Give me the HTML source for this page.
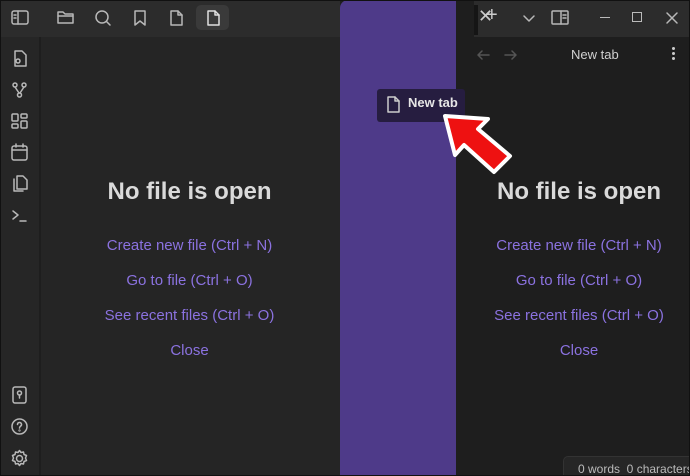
<!DOCTYPE html>
<html><head><style>
*{margin:0;padding:0;box-sizing:border-box}
body{width:690px;height:476px;overflow:hidden;background:#1e1e1e;font-family:"Liberation Sans",sans-serif;position:relative}
.abs{position:absolute}
svg{position:absolute;fill:none;stroke:#b8b8b8;stroke-width:1.5;stroke-linecap:round;stroke-linejoin:round}
.h{color:#dadada;font-weight:bold;font-size:24px;text-align:center;width:100%}
.l{color:#8b72e0;font-size:15px;text-align:center;width:100%}
</style></head><body>
<div class="abs" style="left:0;top:0;width:340px;height:37px;background:#2c2c2c"></div>
<div class="abs" style="left:0;top:37px;width:40px;height:439px;background:#262626;border-right:1px solid #1e1e1e"></div>
<div class="abs" style="left:41px;top:37px;width:299px;height:439px;background:#252525"></div>
<div class="abs" style="left:196px;top:5px;width:33px;height:25px;background:#3a3a3a;border-radius:5px"></div>
<svg style="left:10px;top:9px" width="20" height="18"><rect x="2" y="2" width="16" height="13" rx="2"/><line x1="8" y1="2" x2="8" y2="15"/><line x1="4" y1="6" x2="6" y2="6"/><line x1="4" y1="9" x2="6" y2="9"/></svg>
<svg style="left:56px;top:8px" width="20" height="18"><path d="M2 4h5l2 2h8v9H2z"/><line x1="2" y1="8" x2="17" y2="8"/></svg>
<svg style="left:93px;top:8px" width="20" height="20"><circle cx="9" cy="9" r="6"/><line x1="13.5" y1="13.5" x2="17" y2="17"/></svg>
<svg style="left:130px;top:8px" width="20" height="20"><path d="M5 3h10v14l-5-4-5 4z"/></svg>
<svg style="left:166px;top:8px" width="20" height="20"><path d="M5 3h7l4 4v10H5z"/><path d="M12 3v4h4"/></svg>
<svg style="left:203px;top:8px" width="20" height="20"><path d="M5 3h7l4 4v10H5z" stroke="#e0e0e0"/><path d="M12 3v4h4" stroke="#e0e0e0"/></svg>
<svg style="left:9px;top:48px" width="22" height="22"><path d="M6 3h7l4 4v11H6z"/><circle cx="9" cy="13" r="2"/></svg>
<svg style="left:9px;top:80px" width="22" height="22"><circle cx="6" cy="5" r="2"/><circle cx="15" cy="5" r="2"/><circle cx="10.5" cy="15" r="2"/><path d="M6 7l4 6M15 7l-4 6"/></svg>
<svg style="left:9px;top:111px" width="22" height="22"><rect x="3" y="3" width="6" height="7" rx="1"/><rect x="12" y="3" width="6" height="4" rx="1"/><rect x="3" y="13" width="6" height="4" rx="1"/><rect x="12" y="10" width="6" height="7" rx="1"/></svg>
<svg style="left:9px;top:142px" width="22" height="22"><rect x="3" y="4" width="15" height="14" rx="2"/><line x1="3" y1="8" x2="18" y2="8"/><line x1="7" y1="2" x2="7" y2="5"/><line x1="14" y1="2" x2="14" y2="5"/></svg>
<svg style="left:9px;top:173px" width="22" height="22"><path d="M8 3h6l4 4v9H8z"/><path d="M5 6v12h9"/></svg>
<svg style="left:9px;top:205px" width="22" height="22"><path d="M4 6l5 4-5 4"/><line x1="11" y1="16" x2="17" y2="16"/></svg>
<svg style="left:9px;top:384px" width="22" height="22"><rect x="4" y="3" width="13" height="16" rx="2"/><circle cx="10.5" cy="9" r="2"/><line x1="10.5" y1="11" x2="10.5" y2="14"/></svg>
<svg style="left:9px;top:416px" width="22" height="22"><circle cx="10.5" cy="10.5" r="7.5"/><path d="M8.5 8.5a2 2 0 1 1 3 1.7c-.8.5-1 1-1 1.8"/><circle cx="10.5" cy="14.5" r=".4"/></svg>
<svg style="left:9px;top:448px" width="22" height="22"><circle cx="10.5" cy="10.5" r="3"/><path d="M10.5 2.5l1.5 2 2.5-.5.5 2.5 2.5 1-1 2.5 1 2.5-2.5 1-.5 2.5-2.5-.5-1.5 2-1.5-2-2.5.5-.5-2.5-2.5-1 1-2.5-1-2.5 2.5-1 .5-2.5 2.5.5z"/></svg>
<div class="abs" style="left:40px;top:178px;width:299px">
<div class="h">No file is open</div>
<div class="l" style="margin-top:31px">Create new file (Ctrl + N)</div>
<div class="l" style="margin-top:18px">Go to file (Ctrl + O)</div>
<div class="l" style="margin-top:18px">See recent files (Ctrl + O)</div>
<div class="l" style="margin-top:18px">Close</div>
</div>
<div class="abs" style="left:340px;top:0;width:116px;height:476px;background:#4e3a89;border-radius:8px 0 0 0"></div>
<div class="abs" style="left:456px;top:0;width:234px;height:37px;background:#2c2c2c"></div>
<div class="abs" style="left:456px;top:0;width:18px;height:37px;background:#1e1e1e"></div>
<div class="abs" style="left:474px;top:5px;width:4px;height:30px;background:#151515"></div>
<div class="abs" style="left:478px;top:6px;color:#ccc;font-size:18px">✕</div>
<div class="abs" style="left:486px;top:4px;color:#ccc;font-size:20px">+</div>
<svg style="left:520px;top:9px" width="18" height="18"><path d="M4 7l5 5 5-5"/></svg>
<svg style="left:550px;top:8px" width="20" height="20"><rect x="2" y="3" width="16" height="13" rx="1"/><line x1="11" y1="3" x2="11" y2="16"/><line x1="13" y1="7" x2="16" y2="7"/><line x1="13" y1="10" x2="16" y2="10"/></svg>
<div class="abs" style="left:600px;top:17px;width:10px;height:1px;background:#bbb"></div>
<div class="abs" style="left:632px;top:12px;width:10px;height:10px;border:1.3px solid #bbb"></div>
<svg style="left:663px;top:9px" width="18" height="18"><path d="M4 4l10 10M14 4L4 14"/></svg>
<svg style="left:474px;top:46px" width="20" height="18"><path d="M15 9H4M8 5L4 9l4 4" stroke="#555"/></svg>
<svg style="left:501px;top:46px" width="20" height="18"><path d="M4 9h11M11 5l4 4-4 4" stroke="#555"/></svg>
<div class="abs" style="left:571px;top:47px;color:#d0d0d0;font-size:13px">New tab</div>
<div class="abs" style="left:672px;top:47px;width:3px;height:3px;background:#ccc;border-radius:50%;box-shadow:0 5px 0 #ccc,0 10px 0 #ccc"></div>
<div class="abs" style="left:462px;top:178px;width:234px">
<div class="h">No file is open</div>
<div class="l" style="margin-top:31px">Create new file (Ctrl + N)</div>
<div class="l" style="margin-top:18px">Go to file (Ctrl + O)</div>
<div class="l" style="margin-top:18px">See recent files (Ctrl + O)</div>
<div class="l" style="margin-top:18px">Close</div>
</div>
<div class="abs" style="left:563px;top:456px;width:127px;height:20px;background:#262626;border-radius:5px 0 0 0;border-top:1px solid #333;border-left:1px solid #333;color:#bbb;font-size:12px;padding:5px 0 0 14px;white-space:nowrap">0 words&nbsp; 0 characters</div>
<div class="abs" style="left:377px;top:89px;width:88px;height:33px;background:#261d40;border-radius:3px"></div>
<svg style="left:383px;top:94px" width="20" height="22"><path d="M5 3h7l4 4v11H5z" stroke="#ccc"/><path d="M12 3v4h4" stroke="#ccc"/></svg>
<div class="abs" style="left:408px;top:95px;color:#e6e6e6;font-size:13px;font-weight:bold">New tab</div>
<svg style="left:438px;top:112px;stroke:#fff;stroke-width:4" width="80" height="64"><path d="M7 4 L50 7 L40 17 L72 44 L56 60 L26 33 L17 43 Z" fill="#ee1111"/></svg>
<div class="abs" style="left:0;top:0;width:690px;height:476px;border:1px solid #111"></div>
</body></html>
